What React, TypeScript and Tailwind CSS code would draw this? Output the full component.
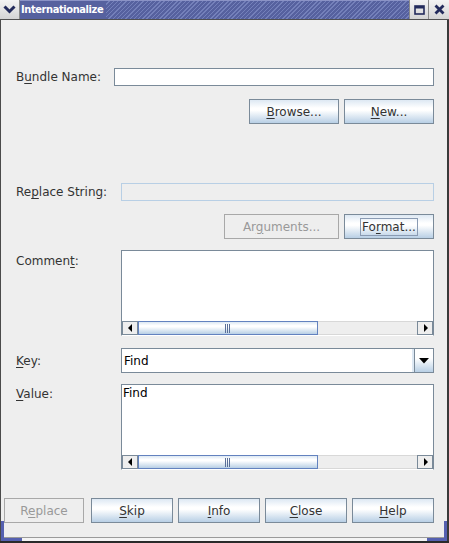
import React from "react";

const FONT = "font-['DejaVu_Sans','Liberation_Sans',sans-serif]";

// text with one underlined mnemonic letter
function Mn({ text, at }: { text: string; at: number }) {
  return (
    <>
      {text.slice(0, at)}
      <span className="underline decoration-1 underline-offset-[2px]">{text[at]}</span>
      {text.slice(at + 1)}
    </>
  );
}

function Btn({
  text,
  at,
  w,
  disabled,
  focused,
}: {
  text: string;
  at: number;
  w: string;
  disabled?: boolean;
  focused?: boolean;
}) {
  if (disabled) {
    return (
      <div
        className={`${w} h-[25px] border border-[#a8a8a8] flex items-center justify-center text-[12px] text-[#999999]`}
      >
        <span>
          <Mn text={text} at={at} />
        </span>
      </div>
    );
  }
  return (
    <div
      className={`${w} h-[25px] border border-[#7a8a99] flex items-center justify-center text-[12px] text-[#333333] bg-[linear-gradient(to_bottom,#dde8f3_0%,#ffffff_35%,#ffffff_45%,#b8cfe5_100%)]`}
    >
      <span className={focused ? "border border-[#8a9bb3] px-[1px] leading-[16px]" : ""}>
        <Mn text={text} at={at} />
      </span>
    </div>
  );
}

function Arrow({ dir }: { dir: "left" | "right" }) {
  return (
    <div className="w-[16px] h-full border border-[#7a8a99] bg-[#eeeeee] flex items-center justify-center">
      <svg width="5" height="8" viewBox="0 0 5 8">
        {dir === "left" ? <path d="M4 0 L0 4 L4 8 Z" fill="#000" /> : <path d="M1 0 L5 4 L1 8 Z" fill="#000" />}
      </svg>
    </div>
  );
}

function HScroll() {
  return (
    <div className="h-[15px] flex bg-[#eeeeee] border-t border-[#ffffff]">
      <Arrow dir="left" />
      <div className="w-[180px] h-full border border-[#6382bf] bg-[linear-gradient(to_bottom,#dde8f3_0%,#ffffff_30%,#ffffff_40%,#b8cfe5_100%)] flex items-center justify-center">
        <svg width="6" height="9" viewBox="0 0 6 9">
          <path d="M0.5 0 V9 M2.5 0 V9 M4.5 0 V9" stroke="#5a6f98" strokeWidth="1" />
        </svg>
      </div>
      <div className="flex-1 h-full border-y border-[#d8d8d8] bg-[#eeeeee]" />
      <Arrow dir="right" />
    </div>
  );
}

function TextArea({ value }: { value?: string }) {
  return (
    <div className="w-[313px] h-[86px] border border-[#7a8a99] border-b-white flex flex-col bg-white">
      <div className="flex-1 px-[1px] pt-[1px] text-[12px] leading-[15px] text-[#000]">{value}</div>
      <HScroll />
    </div>
  );
}

function Label({ children, w }: { children: React.ReactNode; w: string }) {
  return <div className={`${w} shrink-0 text-[12px] text-[#333333]`}>{children}</div>;
}

export default function App() {
  return (
    <div className={`${FONT} w-[449px] h-[543px] relative flex flex-col bg-[#eeeeee] overflow-hidden`}>
      {/* title bar */}
      <div className="h-[20px] flex shrink-0 border-b border-[#505050]">
        <div className="w-[20px] h-full bg-[linear-gradient(to_bottom,#f4f4f4,#d4d4d4)] border-r border-[#8a8a8a] flex items-center justify-center">
          <svg width="13" height="9" viewBox="0 0 13 9">
            <path d="M1.5 1.5 L6.5 6.5 L11.5 1.5" stroke="#232b5c" strokeWidth="3" fill="none" />
          </svg>
        </div>
        <div className="flex-1 h-full flex items-center bg-[#56619f] border-t border-[#8b93c6]">
          <div className="pl-[1px] pr-[3px] h-full flex items-center text-white font-bold text-[11px] tracking-[-0.4px] font-stretch-condensed bg-[#56619f]">
            Internationalize
          </div>
          <div className="flex-1 h-full bg-[repeating-linear-gradient(135deg,#56619f_0px,#56619f_2px,#7480ba_2px,#7480ba_3px)]" />
        </div>
        <div className="w-[20px] h-full bg-[linear-gradient(to_bottom,#f4f4f4,#d4d4d4)] border-x border-[#8a8a8a] flex items-center justify-center">
          <svg width="11" height="10" viewBox="0 0 11 10">
            <rect x="1" y="1" width="9" height="8" fill="none" stroke="#232b5c" strokeWidth="1.6" />
            <rect x="1" y="1" width="9" height="2.5" fill="#232b5c" />
          </svg>
        </div>
        <div className="w-[20px] h-full bg-[linear-gradient(to_bottom,#f4f4f4,#d4d4d4)] flex items-center justify-center">
          <svg width="11" height="11" viewBox="0 0 11 11">
            <path d="M1.5 1.5 L9.5 9.5 M9.5 1.5 L1.5 9.5" stroke="#232b5c" strokeWidth="2.8" />
          </svg>
        </div>
      </div>

      {/* content */}
      <div className="flex-1 flex flex-col border-l border-[#4a4a4a] border-r-2 border-r-[#3a3a3a]">
        <div className="flex-1 flex flex-col pl-[15px] pr-[13px]">
          {/* bundle name */}
          <div className="mt-[48px] flex items-center h-[18px]">
            <Label w="w-[98px]">
              <Mn text="Bundle Name:" at={1} />
            </Label>
            <div className="w-[320px] h-[18px] border border-[#7a8a99] bg-white" />
          </div>
          <div className="mt-[13px] flex justify-end gap-[5px]">
            <Btn text="Browse..." at={0} w="w-[90px]" />
            <Btn text="New..." at={0} w="w-[90px]" />
          </div>

          {/* replace string */}
          <div className="mt-[59px] flex items-center h-[18px]">
            <Label w="w-[105px]">
              <Mn text="Replace String:" at={2} />
            </Label>
            <div className="w-[313px] h-[18px] border border-[#b8cfe5] bg-[#eeeeee]" />
          </div>
          <div className="mt-[13px] flex justify-end gap-[5px]">
            <Btn text="Arguments..." at={2} w="w-[115px]" disabled />
            <Btn text="Format..." at={2} w="w-[90px]" focused />
          </div>

          {/* comment */}
          <div className="mt-[11px] flex">
            <Label w="w-[105px] pt-[2px]">
              <Mn text="Comment:" at={6} />
            </Label>
            <TextArea />
          </div>

          {/* key */}
          <div className="mt-[12px] flex items-center">
            <Label w="w-[105px]">
              <Mn text="Key:" at={0} />
            </Label>
            <div className="w-[313px] h-[25px] border border-[#7a8a99] flex bg-white">
              <div className="flex-1 flex items-center pl-[2px] text-[12px] text-black border-r-2 border-[#dde8f3]">Find</div>
              <div className="w-[19px] h-full border-l border-[#7a8a99] bg-[linear-gradient(to_bottom,#ffffff_0%,#ffffff_40%,#b8cfe5_100%)] flex items-center justify-center">
                <svg width="10" height="6" viewBox="0 0 10 6">
                  <path d="M0 0 H10 L5 5.5 Z" fill="#000" />
                </svg>
              </div>
            </div>
          </div>

          {/* value */}
          <div className="mt-[11px] flex">
            <Label w="w-[105px] pt-[1px]">
              <Mn text="Value:" at={0} />
            </Label>
            <TextArea value="Find" />
          </div>
        </div>

        {/* bottom buttons */}
        <div className="mb-[14px] flex pl-[3px] gap-[5px]">
          <div className="mr-[2px]">
            <Btn text="Replace" at={1} w="w-[80px]" disabled />
          </div>
          <Btn text="Skip" at={0} w="w-[82px]" />
          <Btn text="Info" at={0} w="w-[82px]" />
          <Btn text="Close" at={0} w="w-[82px]" />
          <Btn text="Help" at={0} w="w-[82px]" />
        </div>
        <div className="h-[4px] border-t border-[#9a9a9a] bg-[#f4f4f4]" />
      </div>
      <div className="h-[2px] bg-[#2a2a2a]" />

      {/* resize corners */}
      <div className="absolute left-[1px] top-[521px] w-[3px] h-[20px] bg-[#5560b0]" />
      <div className="absolute left-[1px] top-[538px] w-[21px] h-[3px] bg-[#5560b0]" />
      <div className="absolute left-[444px] top-[521px] w-[3px] h-[20px] bg-[#5560b0]" />
      <div className="absolute left-[427px] top-[538px] w-[20px] h-[3px] bg-[#5560b0]" />
    </div>
  );
}
